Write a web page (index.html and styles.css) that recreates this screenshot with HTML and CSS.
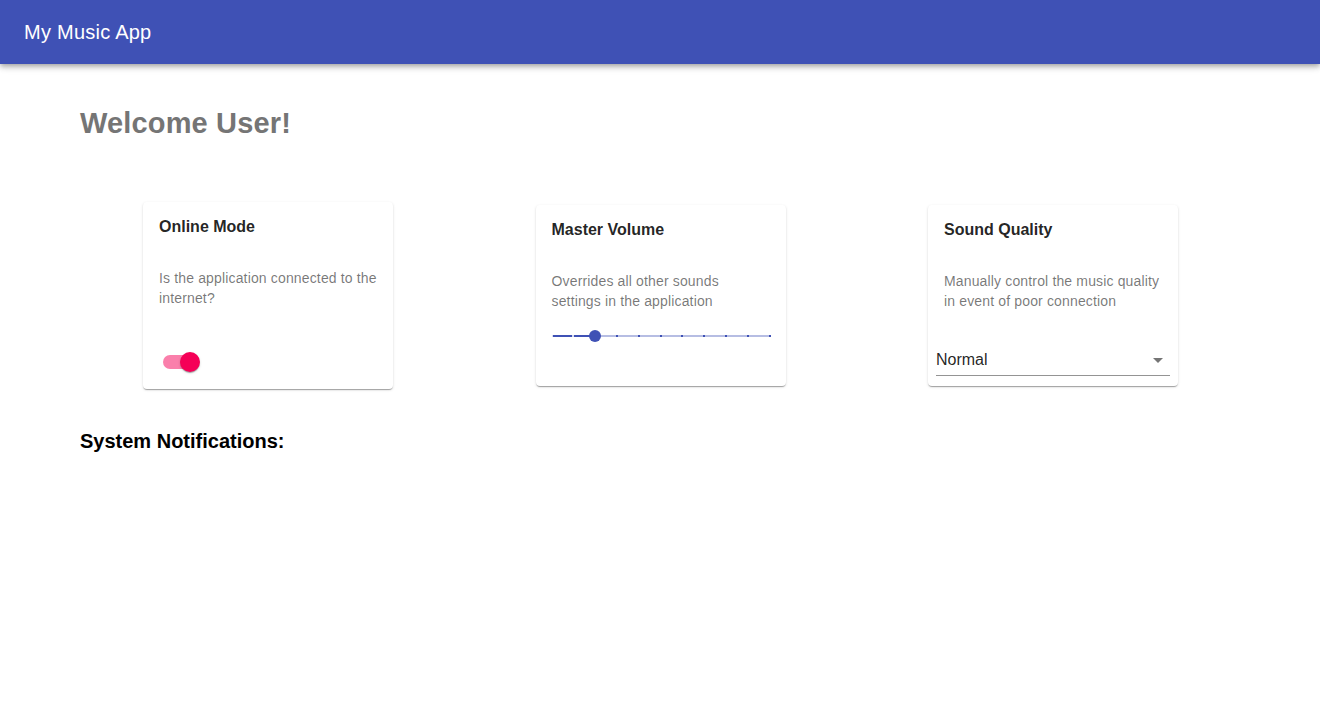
FILE: index.html
```html
<!DOCTYPE html>
<html lang="en">
<head>
<meta charset="utf-8">
<title>My Music App</title>
<link rel="stylesheet" href="styles.css">
</head>
<body>
<header class="appbar">
  <div class="appbar-title">My Music App</div>
</header>
<main class="main">
  <h1 class="welcome">Welcome User!</h1>
  <section class="cards">
    <div class="card card-online">
      <div class="card-content">
        <div class="card-title">Online Mode</div>
        <p class="card-desc">Is the application connected to the internet?</p>
      </div>
      <div class="card-actions">
        <div class="switch">
          <span class="switch-track"></span>
          <span class="switch-thumb"></span>
        </div>
      </div>
    </div>
    <div class="card">
      <div class="card-content">
        <div class="card-title">Master Volume</div>
        <p class="card-desc">Overrides all other sounds settings in the application</p>
        <div class="slider">
          <span class="slider-rail"></span>
          <span class="slider-track" style="width:20%"></span>
          <span class="mark mark-active" style="left:0%"></span>
          <span class="mark mark-active" style="left:10%"></span>
          <span class="mark" style="left:30%"></span>
          <span class="mark" style="left:40%"></span>
          <span class="mark" style="left:50%"></span>
          <span class="mark" style="left:60%"></span>
          <span class="mark" style="left:70%"></span>
          <span class="mark" style="left:80%"></span>
          <span class="mark" style="left:90%"></span>
          <span class="mark" style="left:100%"></span>
          <span class="slider-thumb" style="left:20%"></span>
        </div>
      </div>
    </div>
    <div class="card">
      <div class="card-content card-content-select">
        <div class="card-title">Sound Quality</div>
        <p class="card-desc">Manually control the music quality in event of poor connection</p>
      </div>
      <div class="select">
        <span class="select-value">Normal</span>
        <svg class="select-icon" viewBox="0 0 24 24" width="24" height="24"><path d="M7 10l5 5 5-5z"/></svg>
      </div>
    </div>
  </section>
  <h2 class="notifications">System Notifications:</h2>
</main>
</body>
</html>
```

FILE: styles.css
```css
* { box-sizing: border-box; }
html, body {
  margin: 0;
  padding: 0;
  background: #fff;
  font-family: "Liberation Sans", Arial, Helvetica, sans-serif;
}
.appbar {
  height: 64px;
  background: #3f51b5;
  color: #fff;
  display: flex;
  align-items: center;
  padding: 0 24px;
  box-shadow: 0px 2px 4px -1px rgba(0,0,0,0.2), 0px 4px 5px 0px rgba(0,0,0,0.14), 0px 1px 10px 0px rgba(0,0,0,0.12);
  position: relative;
  z-index: 2;
}
.appbar-title {
  font-size: 20px;
  line-height: 23px;
  font-weight: 400;
  letter-spacing: 0.25px;
}
.main {
  padding: 41px 80px 0;
}
.welcome {
  margin: 0;
  font-size: 29px;
  line-height: 36px;
  font-weight: 700;
  color: #757575;
  letter-spacing: 0.15px;
}
.cards {
  margin-top: 61px;
  padding: 0 62px 0 63px;
  display: flex;
  justify-content: space-between;
  align-items: center;
}
.card {
  width: 250px;
  background: #fff;
  border-radius: 4px;
  box-shadow: 0px 2px 1px -1px rgba(0,0,0,0.2), 0px 1px 1px 0px rgba(0,0,0,0.14), 0px 1px 3px 0px rgba(0,0,0,0.12);
}
.card-content {
  padding: 16px 16px 0;
}
.card-title {
  font-size: 16px;
  line-height: 18px;
  font-weight: 700;
  color: rgba(0,0,0,0.87);
}
.card-desc {
  margin: 32px 0 0;
  font-size: 14px;
  line-height: 20px;
  letter-spacing: 0.15px;
  color: rgba(0,0,0,0.54);
}
.card-actions {
  padding: 35px 8px 8px;
}
.switch {
  position: relative;
  width: 58px;
  height: 38px;
  padding: 12px;
}
.switch-track {
  display: block;
  width: 34px;
  height: 14px;
  border-radius: 7px;
  background: #f50057;
  opacity: 0.5;
}
.switch-thumb {
  position: absolute;
  left: 29px;
  top: 9px;
  width: 20px;
  height: 20px;
  border-radius: 50%;
  background: #f50057;
  box-shadow: 0px 2px 1px -1px rgba(0,0,0,0.2), 0px 1px 1px 0px rgba(0,0,0,0.14), 0px 1px 3px 0px rgba(0,0,0,0.12);
}
.slider {
  position: relative;
  height: 28px;
  margin: 11px 0 36px;
}
.slider-rail {
  position: absolute;
  left: 0;
  right: 0;
  top: 13px;
  height: 2px;
  background: #3f51b5;
  opacity: 0.38;
}
.slider-track {
  position: absolute;
  left: 0;
  top: 13px;
  height: 2px;
  background: #3f51b5;
}
.mark {
  position: absolute;
  top: 13px;
  width: 2px;
  height: 2px;
  margin-left: -1px;
  background: #3f51b5;
}
.mark-active {
  background: #fff;
  opacity: 0.8;
}
.slider-thumb {
  position: absolute;
  top: 8px;
  width: 12px;
  height: 12px;
  margin-left: -6px;
  border-radius: 50%;
  background: #3f51b5;
}
.select {
  position: relative;
  margin: 33px 8px 10px;
  height: 32px;
  padding: 6px 24px 7px 0;
  border-bottom: 1px solid rgba(0,0,0,0.42);
  font-size: 16px;
  line-height: 19px;
  color: rgba(0,0,0,0.87);
}
.select-icon {
  position: absolute;
  right: 0;
  top: 4px;
  fill: rgba(0,0,0,0.54);
}
.notifications {
  margin: 40px 0 0;
  font-size: 20px;
  line-height: 24px;
  font-weight: 700;
  color: #000;
}
```
